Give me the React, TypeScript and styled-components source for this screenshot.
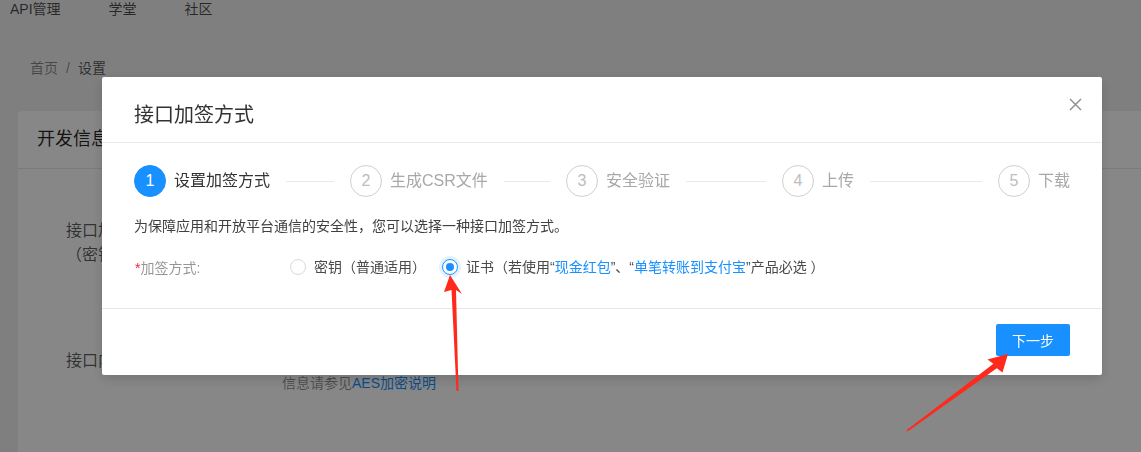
import React from "react";
import styled, { createGlobalStyle } from "styled-components";

const steps = ["设置加签方式", "生成CSR文件", "安全验证", "上传", "下载"];
const navItems = ["API管理", "学堂", "社区"];

const GlobalStyle = createGlobalStyle`
  html, body {
    margin: 0;
    padding: 0;
  }
  body {
    background: #f0f0f0;
    font-family: "Liberation Sans", "Noto Sans CJK SC", sans-serif;
    font-size: 14px;
    color: rgba(0, 0, 0, 0.65);
    overflow: hidden;
  }
`;

const App: React.FC = () => {
  return (
    <>
      <GlobalStyle />
      <Page>
        <TopNav>
          {navItems.map((item) => (
            <NavItem key={item}>{item}</NavItem>
          ))}
        </TopNav>
        <Breadcrumb>
          <Crumb>首页</Crumb>
          <CrumbSep>/</CrumbSep>
          <Crumb current>设置</Crumb>
        </Breadcrumb>
        <Card>
          <CardHeader>开发信息</CardHeader>
          <CardBody>
            <InfoRow>
              <InfoLabel>
                接口加签方式
                <br />
                （密钥/证书）
              </InfoLabel>
              <InfoValue>
                <div>尚未设置</div>
                <div>设置</div>
              </InfoValue>
            </InfoRow>
            <InfoRow>
              <InfoLabel>接口内容加密方式</InfoLabel>
              <InfoValue>
                <div>尚未设置</div>
                <Hint>
                  信息请参见<HintLink>AES加密说明</HintLink>
                </Hint>
              </InfoValue>
            </InfoRow>
          </CardBody>
        </Card>
      </Page>

      <Mask>
        <Modal>
          <ModalHeader>
            <ModalTitle>接口加签方式</ModalTitle>
            <CloseButton aria-label="close">
              <svg width="13" height="13" viewBox="0 0 13 13">
                <path
                  d="M1 1L12 12M12 1L1 12"
                  stroke="#8c8c8c"
                  strokeWidth="1.4"
                  fill="none"
                />
              </svg>
            </CloseButton>
          </ModalHeader>

          <ModalBody>
            <Steps>
              {steps.map((title, i) => (
                <StepItem key={title} last={i === steps.length - 1}>
                  <StepIcon active={i === 0}>{i + 1}</StepIcon>
                  <StepTitle active={i === 0} last={i === steps.length - 1}>
                    {title}
                  </StepTitle>
                </StepItem>
              ))}
            </Steps>

            <Description>
              为保障应用和开放平台通信的安全性，您可以选择一种接口加签方式。
            </Description>

            <FormRow>
              <FormLabel>
                <Required>*</Required>加签方式:
              </FormLabel>
              <RadioOption>
                <RadioDot />
                <RadioText>密钥（普通适用）</RadioText>
              </RadioOption>
              <RadioOption>
                <RadioDot checked />
                <RadioText>
                  证书（若使用“<Link>现金红包</Link>”、“
                  <Link>单笔转账到支付宝</Link>”产品必选 ）
                </RadioText>
              </RadioOption>
            </FormRow>
          </ModalBody>

          <ModalFooter>
            <PrimaryButton>下一步</PrimaryButton>
          </ModalFooter>
        </Modal>
      </Mask>

      <Annotations viewBox="0 0 1141 452">
        <polygon
          points="450,275 462,294 456,290 458.5,391 456.5,391 451.5,290 444,292"
          fill="#ff2a1c"
        />
        <polygon
          points="1008,354 1002.5,372.5 996.8,368.2 907.6,431.6 906.4,430.2 993.4,363.8 987.5,359.5"
          fill="#ff2a1c"
        />
      </Annotations>
    </>
  );
};

const Page = styled.div`
  min-height: 100vh;
  display: flex;
  flex-direction: column;
`;

const TopNav = styled.div`
  display: flex;
  gap: 48px;
  height: 18px;
  padding-left: 10px;
  line-height: 18px;
  font-size: 14px;
  color: rgba(0, 0, 0, 0.7);
`;

const NavItem = styled.span``;

const Breadcrumb = styled.div`
  margin-top: 39px;
  padding-left: 30px;
  line-height: 22px;
  font-size: 14px;
`;

const Crumb = styled.span<{ current?: boolean }>`
  color: ${(p) => (p.current ? "rgba(0, 0, 0, 0.65)" : "rgba(0, 0, 0, 0.45)")};
`;

const CrumbSep = styled.span`
  margin: 0 8px;
  color: rgba(0, 0, 0, 0.45);
`;

const Card = styled.div`
  flex: 1;
  margin: 32px 0 0 18px;
  background: #fff;
  border-radius: 4px 0 0 0;
`;

const CardHeader = styled.div`
  height: 57px;
  padding: 0 19px;
  line-height: 57px;
  font-size: 18px;
  color: rgba(0, 0, 0, 0.85);
  border-bottom: 1px solid #e8e8e8;
`;

const CardBody = styled.div`
  padding: 50px 0 0 48px;
`;

const InfoRow = styled.div`
  display: grid;
  grid-template-columns: 216px 1fr;
  font-size: 16px;
  line-height: 24px;
  color: rgba(0, 0, 0, 0.65);

  & + & {
    margin-top: 82px;
  }
`;

const InfoLabel = styled.div``;

const InfoValue = styled.div``;

const Hint = styled.div`
  font-size: 14px;
  line-height: 20px;
  color: rgba(0, 0, 0, 0.45);
`;

const HintLink = styled.span`
  color: #1890ff;
`;

const Mask = styled.div`
  position: fixed;
  inset: 0;
  background: rgba(0, 0, 0, 0.47);
`;

const Modal = styled.div`
  position: absolute;
  top: 77px;
  left: 102px;
  width: 1000px;
  background: #fff;
  border-radius: 2px;
  box-shadow: 0 4px 12px rgba(0, 0, 0, 0.15);
`;

const ModalHeader = styled.div`
  position: relative;
  padding: 24px 32px 13px;
  border-bottom: 1px solid #e8e8e8;
`;

const ModalTitle = styled.div`
  font-size: 20px;
  line-height: 28px;
  color: #333;
`;

const CloseButton = styled.button`
  position: absolute;
  top: 15px;
  right: 15px;
  width: 24px;
  height: 24px;
  padding: 0;
  border: none;
  background: transparent;
  display: flex;
  align-items: center;
  justify-content: center;
`;

const ModalBody = styled.div`
  padding: 22px 32px 21px;
`;

const Steps = styled.div`
  display: flex;
  height: 32px;
`;

const StepItem = styled.div<{ last: boolean }>`
  flex: ${(p) => (p.last ? "none" : "1")};
  margin-right: ${(p) => (p.last ? "0" : "16px")};
  display: flex;
  align-items: center;
  overflow: hidden;
  white-space: nowrap;
`;

const StepIcon = styled.div<{ active: boolean }>`
  flex: none;
  width: 32px;
  height: 32px;
  box-sizing: border-box;
  margin-right: 8px;
  border-radius: 50%;
  border: 1px solid ${(p) => (p.active ? "#1890ff" : "#d0d0d0")};
  background: ${(p) => (p.active ? "#1890ff" : "#fff")};
  color: ${(p) => (p.active ? "#fff" : "#bdbdbd")};
  font-size: 16px;
  line-height: 30px;
  text-align: center;
`;

const StepTitle = styled.div<{ active: boolean; last: boolean }>`
  position: relative;
  padding-right: ${(p) => (p.last ? "0" : "16px")};
  font-size: 16px;
  line-height: 32px;
  color: ${(p) => (p.active ? "#333" : "#a8a8a8")};

  &::after {
    content: "";
    display: ${(p) => (p.last ? "none" : "block")};
    position: absolute;
    top: 16px;
    left: 100%;
    width: 9999px;
    height: 1px;
    background: #e8e8e8;
  }
`;

const Description = styled.div`
  margin-top: 18px;
  font-size: 14px;
  line-height: 22px;
  color: #404040;
`;

const FormRow = styled.div`
  display: flex;
  align-items: center;
  height: 40px;
  margin-top: 10px;
`;

const FormLabel = styled.div`
  width: 156px;
  flex: none;
  padding-left: 1px;
  box-sizing: border-box;
  font-size: 14px;
  color: rgba(0, 0, 0, 0.42);
`;

const Required = styled.span`
  color: #f5222d;
`;

const RadioOption = styled.label`
  display: inline-flex;
  align-items: center;
  margin-right: 8px;
  white-space: nowrap;
`;

const RadioDot = styled.span<{ checked?: boolean }>`
  position: relative;
  flex: none;
  width: 16px;
  height: 16px;
  box-sizing: border-box;
  border-radius: 50%;
  border: 1px solid ${(p) => (p.checked ? "#1890ff" : "#d9d9d9")};
  background: #fff;
  box-shadow: ${(p) => (p.checked ? "0 0 0 3px rgba(24, 144, 255, 0.12)" : "none")};

  &::after {
    content: "";
    display: ${(p) => (p.checked ? "block" : "none")};
    position: absolute;
    top: 3px;
    left: 3px;
    width: 8px;
    height: 8px;
    border-radius: 50%;
    background: #1890ff;
  }
`;

const RadioText = styled.span`
  padding: 0 8px;
  font-size: 14px;
  line-height: 22px;
  color: #4a4a4a;
`;

const Link = styled.span`
  color: #1890ff;
`;

const ModalFooter = styled.div`
  display: flex;
  justify-content: flex-end;
  padding: 15px 32px 19px;
  border-top: 1px solid #e8e8e8;
`;

const PrimaryButton = styled.button`
  height: 32px;
  padding: 0 16px;
  border: none;
  border-radius: 2px;
  background: #1890ff;
  color: #fff;
  font-family: inherit;
  font-size: 14px;
`;

const Annotations = styled.svg`
  position: fixed;
  inset: 0;
  width: 1141px;
  height: 452px;
  pointer-events: none;
`;

export default App;
